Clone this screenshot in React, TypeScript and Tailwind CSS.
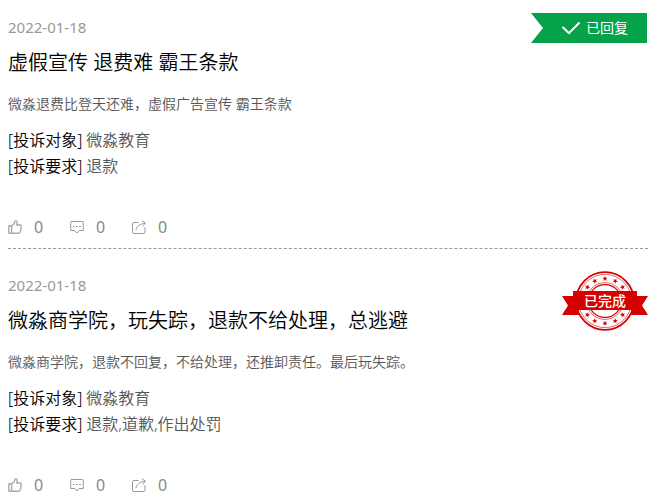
import { ReactNode } from 'react';

type Complaint = {
  date: string;
  title: string;
  summary: string;
  target: string;
  demand: string;
  status: 'replied' | 'done';
};

const complaints: Complaint[] = [
  {
    date: '2022-01-18',
    title: '虚假宣传 退费难 霸王条款',
    summary: '微淼退费比登天还难，虚假广告宣传 霸王条款',
    target: '微淼教育',
    demand: '退款',
    status: 'replied',
  },
  {
    date: '2022-01-18',
    title: '微淼商学院，玩失踪，退款不给处理，总逃避',
    summary: '微淼商学院，退款不回复，不给处理，还推卸责任。最后玩失踪。',
    target: '微淼教育',
    demand: '退款,道歉,作出处罚',
    status: 'done',
  },
];

const STAR = 'M0 -2.8L.7 -.9L2.7 -.8L1.1 .4L1.7 2.3L0 1.2L-1.7 2.3L-1.1 .4L-2.7 -.8L-.7 -.9Z';
const starAngles = [-52, -27, 0, 27, 52, 128, 153, 180, 207, 232];

function RepliedBadge() {
  return (
    <div className="absolute right-px top-[13px] flex h-[30px] w-[116px] items-center bg-[#05a24a] pl-[30px] text-sm text-white [clip-path:polygon(0_0,100%_0,100%_100%,0_100%,12px_50%)]">
      <svg width="20" height="14" viewBox="0 0 20 14" fill="none" stroke="currentColor" strokeWidth="2" aria-hidden="true">
        <path d="M1.5 6L8 12.2L18.5 1.5" />
      </svg>
      <span className="ml-[5px]">已回复</span>
    </div>
  );
}

function DoneBadge() {
  return (
    <div className="absolute right-0 top-[22px] flex h-[60px] w-[86px] items-center justify-center">
      <svg className="absolute inset-0" width="86" height="60" viewBox="0 0 86 60" aria-hidden="true">
        <g fill="none" stroke="#d50000">
          <circle cx="43" cy="30" r="28.8" strokeWidth="1.8" />
          <circle cx="43" cy="30" r="26.6" strokeWidth=".6" />
          <circle cx="43" cy="30" r="18.4" strokeWidth=".6" />
          <circle cx="43" cy="30" r="16.4" strokeWidth="1.3" />
        </g>
        <g fill="#d50000">
          {starAngles.map((angle) => (
            <path key={angle} d={STAR} transform={`rotate(${angle} 43 30) translate(43 7.6)`} />
          ))}
          <path d="M0 25H17V44H0L6 34.5ZM86 25H69V44H86L80 34.5Z" />
          <path d="M11 20H75V39H11Z" />
        </g>
      </svg>
      <span className="relative text-sm font-medium text-white">已完成</span>
    </div>
  );
}

function Action({ label, children }: { label: string; children: ReactNode }) {
  return (
    <button type="button" aria-label={label} className="flex w-[62px] items-center gap-3 text-[#888]">
      <svg width="14" height="14" viewBox="0 0 14 14" fill="none" stroke="#999" strokeLinejoin="round" strokeLinecap="round" aria-hidden="true">
        {children}
      </svg>
      <span>0</span>
    </button>
  );
}

function ComplaintItem({ item }: { item: Complaint }) {
  return (
    <li className="relative border-b border-dashed border-[#999] pb-[9px] pt-6 first:pt-[15px] last:border-b-0">
      {item.status === 'replied' ? <RepliedBadge /> : <DoneBadge />}
      <p className="text-[15px] leading-6 text-[#999]">{item.date}</p>
      <h2 className="mt-[9px] text-xl leading-[30px] font-[350] text-black">{item.title}</h2>
      <p className="mt-4 text-sm leading-5 font-[350] text-[#555]">{item.summary}</p>
      <dl className="mt-[13px] leading-[26px] font-[350] text-[#555]">
        <div className="flex gap-1">
          <dt className="text-black">[投诉对象]</dt>
          <dd>{item.target}</dd>
        </div>
        <div className="flex gap-1">
          <dt className="text-black">[投诉要求]</dt>
          <dd>{item.demand}</dd>
        </div>
      </dl>
      <div className="mt-9 flex leading-6">
        <Action label="点赞">
          <path stroke="#aaa" strokeWidth="1.4" d="M.8 5.8H3.6V13.2H1.6Q.8 13.2 .8 12.4ZM3.6 6L6.3 3.4L6.9 1.4Q7.4 .6 8.5 1Q9.4 1.6 9 3.2L8.5 5H12Q13.4 5 13.2 6.4L12.3 12Q12.1 13.2 10.9 13.2H3.6" />
        </Action>
        <Action label="评论">
          <path d="M1.5 1.5H12.5Q13.3 1.5 13.3 2.3V10.5H9.2L7 13L4.8 10.5H.7V2.3Q.7 1.5 1.5 1.5Z" />
          <path d="M3.5 6.5H4.5M6.5 6.5H7.5M9.5 6.5H10.5" />
        </Action>
        <Action label="分享">
          <path d="M6.3 2.5H2Q.5 2.5 .5 4V12Q.5 13.5 2 13.5H11.5Q13 13.5 13 12V7.5M4 9.8C4.5 6.5 7.5 3.8 13 3.2M10.2 .8L13.3 3.1L11 6" />
        </Action>
      </div>
    </li>
  );
}

export default function App() {
  return (
    <main className="bg-white pl-2 pr-[7px] font-['Noto_Sans','Noto_Sans_CJK_SC',sans-serif]">
      <ul>
        {complaints.map((item) => (
          <ComplaintItem key={item.title} item={item} />
        ))}
      </ul>
    </main>
  );
}
